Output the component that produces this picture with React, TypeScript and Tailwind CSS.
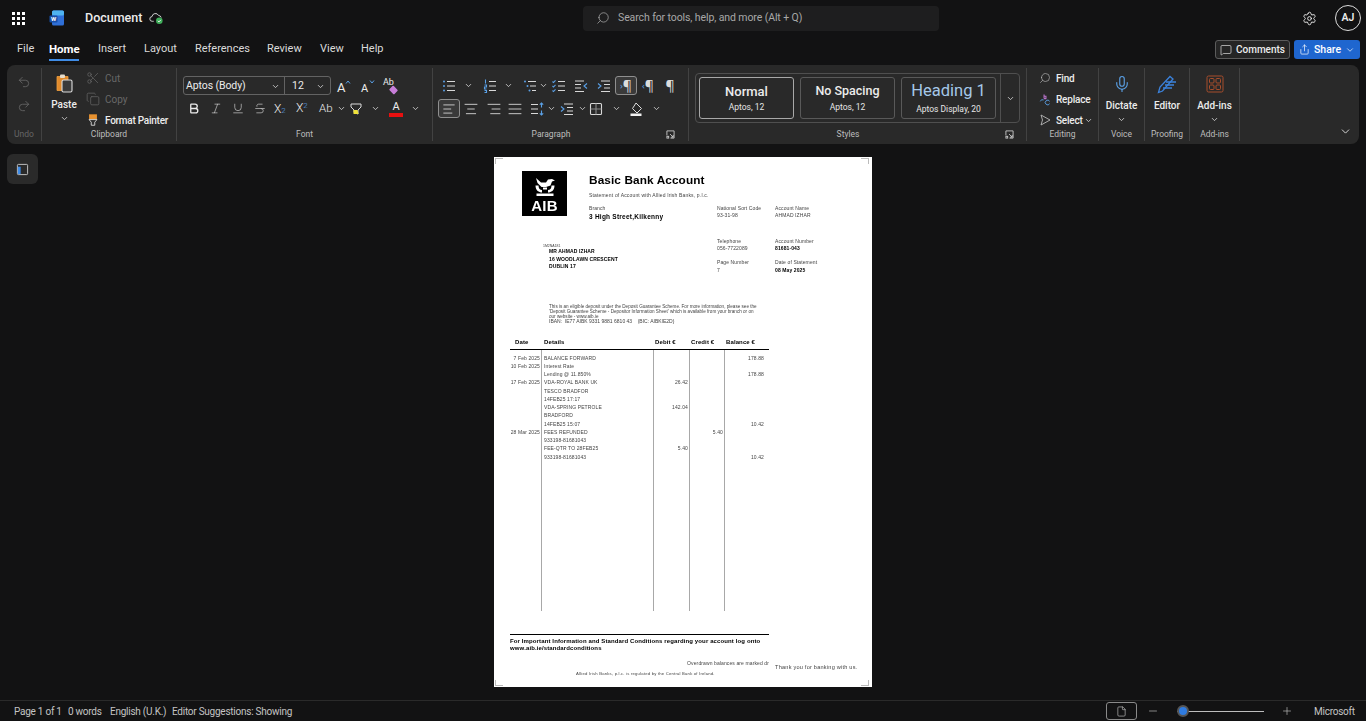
import type { ReactNode } from "react";
import {
  AlignCenter,
  AlignJustify,
  AlignLeft,
  AlignRight,
  Bold,
  ChevronDown,
  Copy,
  Italic,
  MessageSquare,
  Mic,
  Minus,
  Plus,
  Redo2,
  Scissors,
  Search,
  Settings,
  Share,
  Strikethrough,
  Underline,
  Undo2,
  File as FileIcon,
} from "lucide-react";

const Chev = ({ className = "" }: { className?: string }) => (
  <span className={"flex w-[8px] justify-center " + className}>
    <ChevronDown className="h-[9px] w-[9px] shrink-0 text-[#d6d6d6]" strokeWidth={2.2} />
  </span>
);

// small list style icons for the paragraph group
function ListGlyph({ kind, className = "" }: { kind: "bullet" | "number" | "multi" | "check" | "dec" | "inc" | "spacing" | "borders"; className?: string }) {
  const blue = "#5aa0e6";
  const line = "#d8d8d8";
  return (
    <svg viewBox="0 0 16 16" className={"h-4 w-4 shrink-0 " + className} fill="none" strokeWidth="1.1">
      {kind === "bullet" && (
        <>
          <path d="M6 3.5h8M6 8h8M6 12.5h8" stroke={line} />
          <circle cx="3" cy="3.5" r="1" fill={blue} />
          <circle cx="3" cy="8" r="1" fill={blue} />
          <circle cx="3" cy="12.5" r="1" fill={blue} />
        </>
      )}
      {kind === "number" && (
        <>
          <path d="M7 3.5h7M7 8h7M7 12.5h7" stroke={line} />
          <path d="M3.5 1.5v4M2.5 7h2v2h-2v2h2M2.5 12.5h2v2h-2" stroke={blue} />
        </>
      )}
      {kind === "multi" && (
        <>
          <path d="M6 3.5h8M8 8h6M10 12.5h4" stroke={line} />
          <circle cx="3" cy="3.5" r="1" fill={blue} />
          <circle cx="5.5" cy="8" r="1" fill={blue} />
          <circle cx="7.5" cy="12.5" r="1" fill={blue} />
        </>
      )}
      {kind === "check" && (
        <>
          <path d="M7 3.5h7M7 8h7M7 12.5h7" stroke={line} />
          <path d="M1.5 3.5l1 1 2-2.2M1.5 8l1 1 2-2.2M1.5 12.5l1 1 2-2.2" stroke={blue} />
        </>
      )}
      {kind === "dec" && (
        <>
          <path d="M2 3h9M2 6.5h6M2 10h6M2 13.5h9" stroke={line} />
          <path d="M14 5.5L11 8l3 2.5" stroke={blue} />
        </>
      )}
      {kind === "inc" && (
        <>
          <path d="M5 3h9M8 6.5h6M8 10h6M5 13.5h9" stroke={line} />
          <path d="M2 5.5L5 8l-3 2.5" stroke={blue} />
        </>
      )}
      {kind === "spacing" && (
        <>
          <path d="M2 3.5h7M2 8h7M2 12.5h7" stroke={line} />
          <path d="M12.5 2v4.5M10.8 3.6l1.7-1.6 1.7 1.6M12.5 9.5V14M10.8 12.4l1.7 1.6 1.7-1.6" stroke={blue} />
        </>
      )}
      {kind === "borders" && (
        <>
          <rect x="2.5" y="2.5" width="11" height="11" rx="1" stroke={line} />
          <path d="M8 2.5v11M2.5 8h11" stroke="#8a8a8a" />
        </>
      )}
    </svg>
  );
}

function Pilcrow({ mark, className = "" }: { mark?: "left" | "right"; className?: string }) {
  return (
    <span className={"flex h-4 w-4 shrink-0 items-center justify-center font-['Noto_Sans'] text-[14px] leading-none text-[#dcdcdc] " + className}>
      {mark && <span className="text-[9px] text-[#5aa0e6]">{mark === "right" ? "›" : "‹"}</span>}
      <span>¶</span>
    </span>
  );
}

function Group({ className, children, label, labelClass, launcherClass, labelColor = "text-[#bdbdbd]" }: { className: string; children: ReactNode; label: string; labelClass: string; launcherClass?: string; labelColor?: string }) {
  return (
    <div className={"flex h-[73px] shrink-0 flex-col border-r border-[#424242] " + className}>
      <div className="h-[61px] shrink-0">{children}</div>
      <div className="flex h-[10px] items-center pt-[1px]">
        <div className={"whitespace-nowrap text-center text-[8.5px] leading-none " + labelColor + " " + labelClass}>{label}</div>
        {launcherClass && (
          <svg viewBox="0 0 10 10" className={"h-[9px] w-[9px] " + launcherClass} fill="none" stroke="#c8c8c8" strokeWidth="1">
            <path d="M1 6V1h8v8H5M4.5 4.5L8 8M8 5.5V8H5.5" />
            <rect x="1" y="7" width="2" height="2" />
          </svg>
        )}
      </div>
    </div>
  );
}

function StyleCard({ title, sub, active, titleClass }: { title: string; sub: string; active?: boolean; titleClass: string }) {
  return (
    <div className={"flex h-[42px] w-[95px] shrink-0 flex-col items-center justify-center rounded-[3px] border " + (active ? "border-[#a8a8a8]" : "border-[#595959]")}>
      <div className={"leading-none " + titleClass}>{title}</div>
      <div className="mt-[5px] text-[8.5px] leading-none text-[#e6e6e6]">{sub}</div>
    </div>
  );
}

function Ribbon() {
  return (
    <div className="mx-[7px] mt-[2px] flex h-[79px] shrink-0 items-center rounded-lg bg-[#292929] text-[#ececec]">
      <Group className="w-[35px]" label="Undo" labelClass="w-full" labelColor="text-[#666]">
        <div className="flex flex-col items-center gap-[10px] pt-[7px]">
          <Undo2 className="h-[14px] w-[14px] text-[#6e6e6e]" strokeWidth={1.3} />
          <Redo2 className="h-[14px] w-[14px] text-[#6e6e6e]" strokeWidth={1.3} />
        </div>
      </Group>

      <Group className="w-[135px]" label="Clipboard" labelClass="w-full">
        <div className="flex">
          <div className="flex w-[44px] flex-col items-center pt-[5px]">
            <svg viewBox="0 0 20 20" className="h-[20px] w-[20px]" fill="none">
              <path d="M3 3.5h11v14H3z" fill="#e08a2c" stroke="#f0a040" strokeWidth="0.8" />
              <rect x="6" y="1.5" width="5" height="3.5" rx="1" fill="#e6dccb" />
              <rect x="8" y="7" width="10" height="12" rx="1.5" fill="#3a3a3a" stroke="#dcdcdc" strokeWidth="1.1" />
            </svg>
            <div className="mt-[7px] text-[10px] font-medium leading-none">Paste</div>
            <Chev className="mt-[4px]" />
          </div>
          <div className="flex flex-col gap-[5px] pt-[2px]">
            <div className="flex h-[16px] items-center gap-[5px] text-[#686868]">
              <Scissors className="h-[14px] w-[14px] -scale-y-100" strokeWidth={1.2} />
              <span className="text-[10px]">Cut</span>
            </div>
            <div className="flex h-[16px] items-center gap-[5px] text-[#686868]">
              <Copy className="h-[14px] w-[14px]" strokeWidth={1.2} />
              <span className="text-[10px]">Copy</span>
            </div>
            <div className="flex h-[16px] items-center gap-[5px]">
              <svg viewBox="0 0 14 16" className="h-[14px] w-[14px]" fill="none">
                <path d="M2.5 1.5h9v6h-9z" fill="#e6912f" />
                <path d="M2.5 7.5h9l-2.5 3v3.5h-4v-3.5z" fill="#2c2c2c" stroke="#dcdcdc" strokeWidth="1" />
              </svg>
              <span className="whitespace-nowrap text-[10px] font-medium tracking-[-0.25px]">Format Painter</span>
            </div>
          </div>
        </div>
      </Group>

      <Group className="w-[256px]" label="Font" labelClass="w-full">
        <div className="pl-[6px] pt-[8px]">
          <div className="flex items-center">
            <div className="flex h-[19px] w-[148px] items-center rounded-[3px] border border-[#636363] text-[10.5px]">
              <div className="flex h-full w-[101px] items-center justify-between border-r border-[#636363] pl-[2px] pr-[5px] pt-[1px]">
                <span className="tracking-[-0.1px]">Aptos (Body)</span>
                <Chev />
              </div>
              <div className="flex flex-1 items-center justify-between pl-[7px] pr-[6px] pt-[1px]">
                <span>12</span>
                <Chev />
              </div>
            </div>
            <span className="relative ml-[6px] flex h-4 w-[14px] items-end text-[13px] leading-none">
              A
              <svg viewBox="0 0 6 4" className="absolute right-0 top-[2px] h-[4px] w-[6px]" fill="none" stroke="#5aa0e6" strokeWidth="1"><path d="M1 3.5l2-2.5 2 2.5" /></svg>
            </span>
            <span className="relative ml-[10px] flex h-4 w-[14px] items-end text-[11px] leading-none">
              A
              <svg viewBox="0 0 6 4" className="absolute right-0 top-[2px] h-[4px] w-[6px]" fill="none" stroke="#5aa0e6" strokeWidth="1"><path d="M1 .5l2 2.5 2-2.5" /></svg>
            </span>
            <span className="relative ml-[8px] flex h-4 w-4 items-start text-[9px] leading-none">
              Ab
              <span className="absolute bottom-[1px] right-[2px] h-[6px] w-[7px] rotate-45 rounded-[1px] bg-[#c77dd8]" />
            </span>
          </div>
          <div className="mt-[4px] flex h-[19px] items-center pl-[3px]">
            <Bold className="h-[13px] w-4 shrink-0" strokeWidth={2.4} />
            <Italic className="ml-[6px] h-[13px] w-4 shrink-0 text-[#c8c8c8]" strokeWidth={1.3} />
            <Underline className="ml-[6px] h-[13px] w-4 shrink-0 text-[#c8c8c8]" strokeWidth={1.3} />
            <Strikethrough className="ml-[6px] h-[13px] w-4 shrink-0 text-[#c8c8c8]" strokeWidth={1.3} />
            <span className="ml-[6px] w-4 shrink-0 text-[12px] font-light leading-none">X<span className="text-[8px] text-[#5aa0e6]">2</span></span>
            <span className="ml-[6px] -mt-[2px] w-4 shrink-0 text-[12px] font-light leading-none">X<span className="relative -top-[4px] text-[8px] text-[#5aa0e6]">2</span></span>
            <span className="ml-[7px] w-4 shrink-0 text-[11.5px] font-light leading-none">Ab</span>
            <Chev className="ml-[2px]" />
            <svg viewBox="0 0 16 16" className="ml-[3px] h-4 w-4 shrink-0" fill="none">
              <path d="M3 3h10v3l-3 3v4l-4-1.5V9L3 6z" stroke="#dcdcdc" strokeWidth="1" />
              <path d="M5.5 13h5l-1 -4h-4z" fill="#f0e33a" />
            </svg>
            <Chev className="ml-[7px]" />
            <span className="relative ml-[9px] flex h-4 w-4 shrink-0 justify-center text-[11px] leading-none">
              A
              <span className="absolute bottom-0 left-[1px] h-[4px] w-[14px] bg-[#e81010]" />
            </span>
            <Chev className="ml-[7px]" />
          </div>
        </div>
      </Group>

      <Group className="w-[256px]" label="Paragraph" labelClass="ml-[88px] w-[60px]" launcherClass="ml-[85px]">
        <div className="pl-[5px] pt-[8px]">
          <div className="flex h-[19px] items-center">
            <ListGlyph kind="bullet" className="ml-[3px]" />
            <Chev className="ml-[7px]" />
            <ListGlyph kind="number" className="ml-[10px]" />
            <Chev className="ml-[6px]" />
            <ListGlyph kind="multi" className="ml-[10px]" />
            <Chev className="ml-[1px]" />
            <ListGlyph kind="check" className="ml-[4px]" />
            <ListGlyph kind="dec" className="ml-[6px]" />
            <ListGlyph kind="inc" className="ml-[7px]" />
            <span className="ml-[3px] flex h-[19px] w-[22px] items-center justify-center rounded-[3px] border border-[#8f8f8f] bg-[#3a3a3a]">
              <Pilcrow mark="right" />
            </span>
            <Pilcrow mark="left" className="ml-[3px]" />
            <Pilcrow className="ml-[6px]" />
          </div>
          <div className="mt-[4px] flex h-[19px] items-center">
            <span className="flex h-[19px] w-[22px] items-center justify-center rounded-[3px] border border-[#8f8f8f] bg-[#3a3a3a]">
              <AlignLeft className="h-[14px] w-[14px]" strokeWidth={1.3} />
            </span>
            <AlignCenter className="ml-[3px] h-4 w-4 shrink-0" strokeWidth={1.2} />
            <AlignRight className="ml-[7px] h-4 w-4 shrink-0" strokeWidth={1.2} />
            <AlignJustify className="ml-[5px] h-4 w-4 shrink-0" strokeWidth={1.2} />
            <ListGlyph kind="spacing" className="ml-[6px]" />
            <Chev className="ml-[2px]" />
            <ListGlyph kind="inc" className="ml-[4px]" />
            <Chev className="ml-[3px]" />
            <ListGlyph kind="borders" className="ml-[2px]" />
            <Chev className="ml-[8px]" />
            <svg viewBox="0 0 16 16" className="ml-[9px] h-4 w-4 shrink-0" fill="none">
              <path d="M7 2l5.5 5.5L8 12 3.5 7.5z" stroke="#dcdcdc" strokeWidth="1" />
              <path d="M1.5 12.5h11v2.5h-11z" fill="#f2f2f2" />
            </svg>
            <Chev className="ml-[7px]" />
          </div>
        </div>
      </Group>

      <Group className="w-[338px]" label="Styles" labelClass="ml-[129px] w-[60px]" launcherClass="ml-[127px]">
        <div className="pl-[6px] pt-[5px]">
          <div className="flex h-[50px] w-[325px] items-center rounded-[4px] border border-[#4f4f4f] pl-[3px]">
            <StyleCard title="Normal" sub="Aptos, 12" active titleClass="text-[13px] font-medium" />
            <div className="w-[6px] shrink-0" />
            <StyleCard title="No Spacing" sub="Aptos, 12" titleClass="text-[12.5px] font-medium" />
            <div className="w-[6px] shrink-0" />
            <StyleCard title="Heading 1" sub="Aptos Display, 20" titleClass="text-[16.5px] text-[#a5c8e8]" />
            <div className="ml-[4px] flex h-full flex-1 items-center justify-center border-l border-[#4f4f4f]">
              <Chev />
            </div>
          </div>
        </div>
      </Group>

      <Group className="w-[72px]" label="Editing" labelClass="w-full">
        <div className="flex flex-col gap-[5px] pl-[12px] pt-[2px]">
          <div className="flex h-[16px] items-center gap-[5px]">
            <Search className="h-[12px] w-[12px] -scale-x-100 text-[#b8b8b8]" strokeWidth={1.3} />
            <span className="text-[10px] font-medium tracking-[-0.2px]">Find</span>
          </div>
          <div className="flex h-[16px] items-center gap-[5px]">
            <svg viewBox="0 0 12 14" className="h-[13px] w-[12px]" fill="none">
              <path d="M5 1.5v4.5M5 3.5h2v2.5H5" stroke="#b773c9" strokeWidth="1.2" />
              <path d="M1 9a2.5 2.5 0 0 1 3.5-1.5M11 11.5A2.5 2.5 0 1 1 11 9" stroke="#5aa0e6" strokeWidth="1" />
            </svg>
            <span className="text-[10px] font-medium tracking-[-0.2px]">Replace</span>
          </div>
          <div className="flex h-[16px] items-center gap-[5px]">
            <svg viewBox="0 0 12 12" className="h-[12px] w-[12px]" fill="none">
              <path d="M2 1l9 5-9 5 1.5-5z" stroke="#b8b8b8" strokeWidth="0.9" />
            </svg>
            <span className="text-[10px] font-medium tracking-[-0.2px]">Select</span>
            <Chev className="-ml-[3px]" />
          </div>
        </div>
      </Group>

      <Group className="w-[46px]" label="Voice" labelClass="w-full">
        <div className="flex flex-col items-center pt-[7px]">
          <Mic className="h-[18px] w-[18px] text-[#5aa0e6]" strokeWidth={1.5} />
          <div className="mt-[8px] text-[10px] font-medium leading-none">Dictate</div>
          <Chev className="mt-[4px]" />
        </div>
      </Group>

      <Group className="w-[45px]" label="Proofing" labelClass="w-full">
        <div className="flex flex-col items-center pt-[6px]">
          <svg viewBox="0 0 20 20" className="h-[20px] w-[20px]" fill="none">
            <path d="M1.5 18.5L3 13 13 2.5l3 2.5L5.5 17z" stroke="#3b82dc" strokeWidth="1.3" />
            <path d="M9 8h10M8 11h9M6 14h9" stroke="#3b82dc" strokeWidth="1.4" />
          </svg>
          <div className="mt-[7px] text-[10px] font-medium leading-none">Editor</div>
        </div>
      </Group>

      <Group className="w-[50px]" label="Add-ins" labelClass="w-full">
        <div className="flex flex-col items-center pt-[7px]">
          <svg viewBox="0 0 18 18" className="h-[18px] w-[18px]" fill="none" stroke="#a84e2c" strokeWidth="1">
            <rect x="1" y="1" width="16" height="16" rx="1.5" />
            <rect x="3.5" y="3.5" width="4.5" height="4.5" rx="1" />
            <rect x="10" y="3.5" width="4.5" height="4.5" rx="1" />
            <rect x="3.5" y="10" width="4.5" height="4.5" rx="1" />
            <rect x="10" y="10" width="4.5" height="4.5" rx="1" />
          </svg>
          <div className="mt-[8px] whitespace-nowrap text-[10px] font-medium leading-none">Add-ins</div>
          <Chev className="mt-[4px]" />
        </div>
      </Group>

      <div className="flex h-[73px] flex-1 items-end justify-end pb-[3px] pr-[7px]">
        <ChevronDown className="h-[13px] w-[13px]" strokeWidth={1.6} />
      </div>
    </div>
  );
}

const rows = [
  { date: "7 Feb 2025", details: "BALANCE FORWARD", balance: "178.88" },
  { date: "10 Feb 2025", details: "Interest Rate" },
  { details: "Lending @ 11.850%", balance: "178.88" },
  { date: "17 Feb 2025", details: "VDA-ROYAL BANK UK", debit: "26.42" },
  { details: "TESCO BRADFOR" },
  { details: "14FEB25 17:17" },
  { details: "VDA-SPRING PETROLE", debit: "142.04" },
  { details: "BRADFORD" },
  { details: "14FEB25 15:07", balance: "10.42" },
  { date: "28 Mar 2025", details: "FEES REFUNDED", credit: "5.40" },
  { details: "933198-81681043" },
  { details: "FEE-QTR TO 28FEB25", debit: "5.40" },
  { details: "933198-81681043", balance: "10.42" },
];

const cellDate = "w-[31px] pr-[1px] text-right";
const cellDetails = "w-[112px] border-l border-[#a8a8a8] pl-[2px]";
const cellDebit = "w-[36px] border-l border-[#a8a8a8] pr-[1px] text-right";
const cellCredit = "w-[35px] border-l border-[#a8a8a8] pr-[1px] text-right";
const cellBalance = "w-[45px] border-l border-[#a8a8a8] pr-[5px] text-right";

function Page() {
  return (
    <div className="relative ml-[456px] mt-[3px] h-[530px] w-[378px] shrink-0 bg-white text-[5px] leading-none tracking-[0.11px] text-[#444] blur-[0.3px]" style={{ fontFamily: '"Liberation Sans", Arial, sans-serif' }}>
      {/* crop marks */}
      <div className="absolute left-[1px] top-[1px] h-[6px] w-[8px] border-l border-t border-[#bbb]" />
      <div className="absolute right-[3px] top-[1px] h-[6px] w-[8px] border-r border-t border-[#bbb]" />
      <div className="absolute bottom-[1px] left-[1px] h-[6px] w-[8px] border-b border-l border-[#bbb]" />
      <div className="absolute bottom-[1px] right-[3px] h-[6px] w-[8px] border-b border-r border-[#bbb]" />

      <div className="flex pl-[28px] pt-[14px]">
        <div className="flex h-[45px] w-[45px] shrink-0 flex-col items-center bg-black pt-[6px]">
          <svg viewBox="0 0 24 20" className="h-[20px] w-[24px]" fill="white">
            <path d="M3 1l5 4.5h5l2-3 4-.5 3 1.5-3 1-1.5 4-4.5 1.5H8.5L4.5 6z" />
            <path d="M2.5 8.5c0 5 3.5 7 6.5 7v-2.5c-2 0-3.5-1.5-3.5-4.5zM21.5 8.5c0 5-3.5 7-6.5 7v-2.5c2 0 3.5-1.5 3.5-4.5zM10 10.5h4v2h-4z" />
            <path d="M3.5 16.5h17v2.5h-17z" />
          </svg>
          <div className="mt-[1px] text-[15px] font-bold leading-none tracking-[0.3px] text-white">AIB</div>
        </div>
        <div className="ml-[22px] flex-1">
          <div className="mt-[3px] text-[11.8px] font-bold leading-[12px] text-black">Basic Bank Account</div>
          <div className="mt-[7px] h-[5px] tracking-[0.17px]">Statement of Account with Allied Irish Banks, p.l.c.</div>
          <div className="mt-[8px] flex">
            <div className="w-[128px]">
              <div>Branch</div>
              <div className="mt-[3px] text-[6.5px] font-bold tracking-[0.24px] text-black">3 High Street,Kilkenny</div>
            </div>
            <div className="w-[58px]">
              <div>National Sort Code</div>
              <div className="mt-[2px]">93-31-98</div>
            </div>
            <div>
              <div>Account Name</div>
              <div className="mt-[2px]">AHMAD IZHAR</div>
            </div>
          </div>
        </div>
      </div>

      <div className="mt-[18px] flex pl-[49px]">
        <div className="w-[174px] pt-[6px]">
          <div className="text-[3.5px] tracking-normal">1M2NA181</div>
          <div className="ml-[6px] mt-[1px] flex flex-col gap-[2.5px] font-bold text-black">
            <div>MR AHMAD IZHAR</div>
            <div>16 WOODLAWN CRESCENT</div>
            <div>DUBLIN 17</div>
          </div>
        </div>
        <div className="flex">
          <div className="w-[58px]">
            <div>Telephone</div>
            <div className="mt-[2px]">056-7722089</div>
            <div className="mt-[9px]">Page Number</div>
            <div className="mt-[3px]">7</div>
          </div>
          <div>
            <div>Account Number</div>
            <div className="mt-[2px] font-bold text-black">81681-043</div>
            <div className="mt-[9px]">Date of Statement</div>
            <div className="mt-[3px] font-bold text-black">08 May 2025</div>
          </div>
        </div>
      </div>

      <div className="ml-[55px] mt-[31px] text-[4.6px] leading-[5.3px] tracking-[0px]">
        <div>This is an eligible deposit under the Deposit Guarantee Scheme. For more information, please see the</div>
        <div>'Deposit Guarantee Scheme - Depositor Information Sheet' which is available from your branch or on</div>
        <div>our website - www.aib.ie</div>
        <div className="text-[5px]">IBAN:&nbsp; IE77 AIBK 9331 9881 6810 43 &nbsp; &nbsp;(BIC: AIBKIE2D)</div>
      </div>

      <div className="ml-[16px] mt-[14px] w-[259px]">
        <div className="flex h-[11px] border-b-[1.5px] border-black text-[6px] font-bold text-black">
          <div className="w-[34px] pl-[5px]">Date</div>
          <div className="w-[111px]">Details</div>
          <div className="w-[36px]">Debit €</div>
          <div className="w-[35px]">Credit €</div>
          <div>Balance €</div>
        </div>
        <div className="flex h-[261px] flex-col">
          <div className="flex h-[6px] shrink-0">
            <div className={cellDate} />
            <div className={cellDetails} />
            <div className={cellDebit} />
            <div className={cellCredit} />
            <div className={cellBalance} />
          </div>
          {rows.map((r, i) => (
            <div key={i} className="flex h-[8.25px] shrink-0">
              <div className={cellDate}>{r.date}</div>
              <div className={cellDetails}>{r.details}</div>
              <div className={cellDebit}>{r.debit}</div>
              <div className={cellCredit}>{r.credit}</div>
              <div className={cellBalance}>{r.balance}</div>
            </div>
          ))}
          <div className="flex flex-1">
            <div className={cellDate} />
            <div className={cellDetails} />
            <div className={cellDebit} />
            <div className={cellCredit} />
            <div className={cellBalance} />
          </div>
        </div>
      </div>

      <div className="ml-[16px] mt-[23px] flex">
        <div className="w-[259px]">
          <div className="border-t-[1.5px] border-black pt-[3px] text-[6px] font-bold leading-[7px] tracking-[0.12px] text-black">
            <div>For Important Information and Standard Conditions regarding your account log onto</div>
            <div>www.aib.ie/standardconditions</div>
          </div>
          <div className="mt-[9px] text-right">Overdrawn balances are marked dr</div>
          <div className="ml-[66px] mt-[6px] text-[4.2px] tracking-[0.21px]">Allied Irish Banks, p.l.c. is regulated by the Central Bank of Ireland.</div>
        </div>
        <div className="ml-[6px] mt-[31px] whitespace-nowrap text-[5.6px] tracking-[0.22px]">Thank you for banking with us.</div>
      </div>
    </div>
  );
}

export default function App() {
  return (
    <div className="flex h-[721px] w-[1366px] flex-col overflow-hidden bg-[#121213] text-[#ececec]" style={{ fontFamily: 'Roboto, "Noto Sans", sans-serif' }}>
      {/* title bar */}
      <div className="flex h-[36px] shrink-0 items-center">
        <div className="flex w-[583px] shrink-0 items-center">
          <div className="ml-[12px] grid w-[13px] grid-cols-3 gap-[2px]">
            {Array.from({ length: 9 }).map((_, i) => (
              <span key={i} className="h-[3px] w-[3px] bg-white" />
            ))}
          </div>
          <svg viewBox="0 0 16 16" className="ml-[24px] h-[16px] w-[16px]">
            <rect x="3" y="0.5" width="12" height="15" rx="1.5" fill="#2f6fd8" />
            <rect x="3" y="0.5" width="12" height="5" rx="1.5" fill="#4fb3f0" />
            <rect x="0.5" y="5.5" width="8" height="7" rx="1" fill="#174fa8" />
            <text x="4.5" y="11" fontSize="6" fontWeight="700" fill="white" textAnchor="middle">W</text>
          </svg>
          <span className="ml-[20px] text-[12.5px] font-medium">Document</span>
          <svg viewBox="0 0 16 14" className="ml-[7px] h-[14px] w-[15px]" fill="none">
            <path d="M5 10.5H3.5a2.5 2.5 0 0 1-.3-5 3.7 3.7 0 0 1 7-1.2A3 3 0 0 1 13 6.5" stroke="#d8d8d8" strokeWidth="1" />
            <circle cx="11" cy="10" r="3.5" fill="#3fae5a" />
            <path d="M9.4 10l1.2 1.2 2-2.2" stroke="#fff" strokeWidth="0.9" />
          </svg>
        </div>
        <div className="flex h-[25px] w-[356px] shrink-0 items-center rounded-[4px] bg-[#1e1e1f] pl-[13px]">
          <Search className="h-[14px] w-[14px] -scale-x-100 text-[#b0b0b0]" strokeWidth={1.2} />
          <span className="ml-[8px] whitespace-nowrap text-[10.5px] tracking-[-0.1px] text-[#a8a8a8]">Search for tools, help, and more (Alt + Q)</span>
        </div>
        <div className="flex-1" />
        <Settings className="mr-[18px] h-[15px] w-[15px]" strokeWidth={1.5} />
        <div className="mr-[5px] flex h-[26px] w-[26px] items-center justify-center rounded-full border border-[#dcdcdc] text-[10.5px] font-semibold">AJ</div>
      </div>

      {/* tabs */}
      <div className="flex h-[27px] shrink-0 items-center">
        <div className="ml-[17px] flex flex-1 text-[11px] text-[#dadada]">
          <span className="w-[32px]">File</span>
          <span className="relative w-[49px] text-[11.5px] font-bold text-white">
            Home
            <span className="absolute left-0 top-[18px] h-[2px] w-[30px] bg-[#3f8ce6]" />
          </span>
          <span className="w-[46px]">Insert</span>
          <span className="w-[51px]">Layout</span>
          <span className="w-[72px]">References</span>
          <span className="w-[53px]">Review</span>
          <span className="w-[41px]">View</span>
          <span>Help</span>
        </div>
        <div className="flex h-[19px] w-[75px] items-center justify-center gap-[4px] rounded-[3px] border border-[#5c5c5c] bg-[#252525] text-[10px] font-medium">
          <MessageSquare className="h-[12px] w-[12px]" strokeWidth={1.3} />
          Comments
        </div>
        <div className="ml-[4px] mr-[6px] flex h-[19px] w-[66px] items-center justify-center gap-[4px] rounded-[3px] bg-[#1f66cf] text-[10.5px] font-medium text-white">
          <Share className="h-[11px] w-[11px]" strokeWidth={1.5} />
          Share
          <ChevronDown className="h-[10px] w-[10px]" strokeWidth={1.6} />
        </div>
      </div>

      <Ribbon />

      {/* document area */}
      <div className="flex min-h-0 flex-1 items-start pl-[7px] pt-[10px]">
        <div className="flex h-[30px] w-[31px] shrink-0 items-center justify-center rounded-md bg-[#2a2a2a]">
          <svg viewBox="0 0 14 14" className="h-[13px] w-[13px]" fill="none">
            <rect x="1.5" y="1.5" width="11" height="11" rx="1" stroke="#c8c8c8" strokeWidth="1" />
            <rect x="2" y="4" width="3" height="8" fill="#3f8ce6" />
          </svg>
        </div>
        <Page />
      </div>

      {/* status bar */}
      <div className="flex h-[21px] shrink-0 items-center whitespace-nowrap border-t border-[#2a2a2a] text-[10px] tracking-[-0.25px] text-[#c4c4c4]">
        <span className="ml-[14px] w-[54px]">Page 1 of 1</span>
        <span className="w-[42px]">0 words</span>
        <span className="w-[62px]">English (U.K.)</span>
        <span>Editor Suggestions: Showing</span>
        <div className="flex-1" />
        <div className="flex h-[18px] w-[31px] items-center justify-center rounded-[3px] border border-[#8a8a8a]">
          <FileIcon className="h-[11px] w-[11px]" strokeWidth={1.4} />
        </div>
        <Minus className="ml-[10px] h-[12px] w-[12px]" strokeWidth={1.3} />
        <div className="relative ml-[18px] flex h-[14px] w-[87px] items-center">
          <div className="h-[1px] w-full bg-[#bdbdbd]" />
          <div className="absolute left-0 top-[1px] h-[12px] w-[12px] rounded-full border-2 border-[#555] bg-[#2f7be0]" />
        </div>
        <Plus className="ml-[17px] h-[12px] w-[12px]" strokeWidth={1.3} />
        <span className="ml-[21px] mr-[13px] w-[39px]">Microsoft</span>
      </div>
    </div>
  );
}
